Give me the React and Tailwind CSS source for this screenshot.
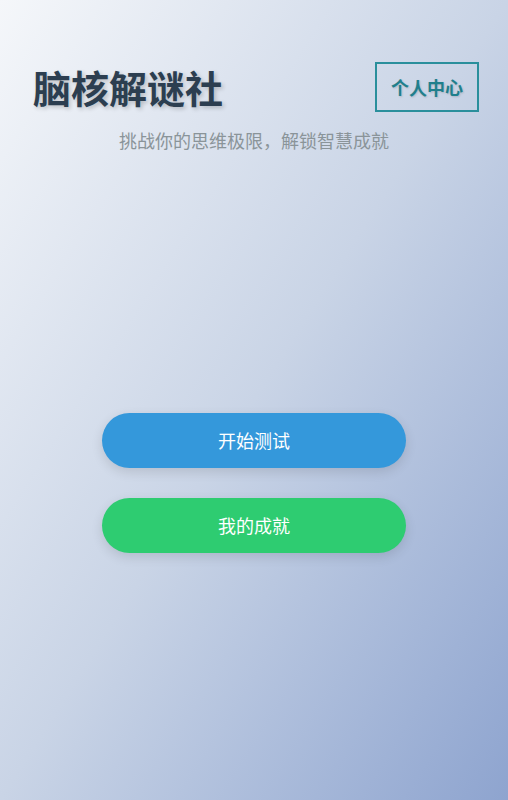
export default function App() {
  return (
    <div
      className="min-h-[800px] w-full bg-gradient-to-br from-[#f5f7fa] via-[#c9d4e6] to-[#8ea4cf] flex flex-col"
      style={{ fontFamily: '"Noto Sans CJK SC", "Noto Sans", sans-serif' }}
    >
      <header className="flex items-center justify-between pl-[33px] pr-[29px] pt-[62px]">
        <h1 className="text-[38px] font-bold leading-[50px] text-[#2c3e50] [text-shadow:2px_2px_4px_rgba(0,0,0,0.2)]">
          脑核解谜社
        </h1>
        <button className="h-[50px] w-[104px] border-2 border-[#2a8f9c] text-[18px] font-bold text-[#1f7f8c] [text-shadow:1px_1px_2px_rgba(0,0,0,0.15)]">
          个人中心
        </button>
      </header>
      <p className="mt-[16px] text-center text-[18px] leading-[24px] text-[#8a9499]">
        挑战你的思维极限，解锁智慧成就
      </p>
      <div className="mt-[261px] flex flex-col items-center gap-[30px]">
        <button className="h-[55px] w-[304px] rounded-full bg-[#3498db] text-[18px] text-white shadow-[0_4px_12px_rgba(0,0,0,0.12)]">
          开始测试
        </button>
        <button className="h-[55px] w-[304px] rounded-full bg-[#2ecc71] text-[18px] text-white shadow-[0_4px_12px_rgba(0,0,0,0.12)]">
          我的成就
        </button>
      </div>
    </div>
  );
}
